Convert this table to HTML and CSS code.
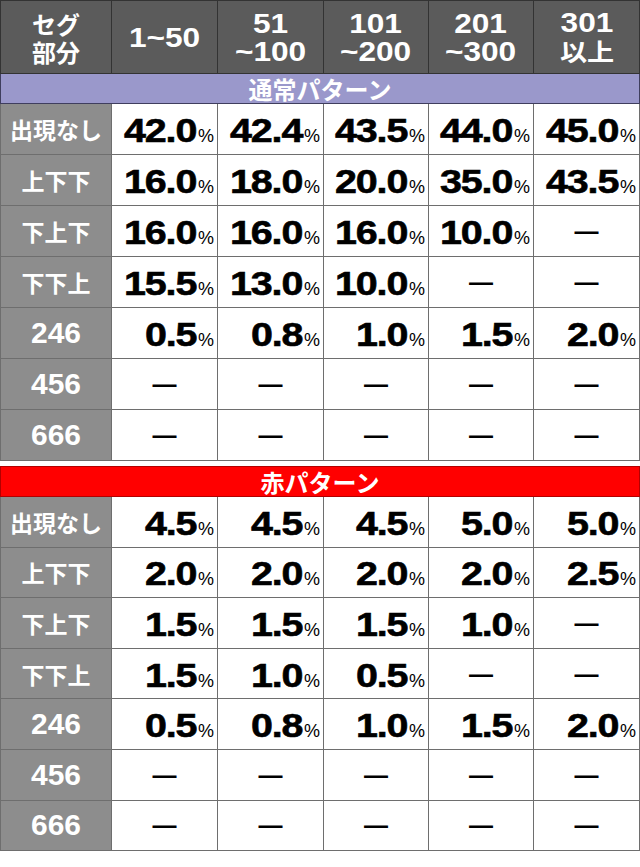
FILE: index.html
```html
<!DOCTYPE html>
<html lang="ja">
<head>
<meta charset="utf-8">
<link rel="stylesheet" href="styles.css">
</head>
<body>
<table class="grid">
  <colgroup>
    <col class="c-label"><col class="c-a"><col class="c-a"><col class="c-b"><col class="c-b"><col class="c-a">
  </colgroup>
  <tr class="head">
    <th><span class="h jp">セグ<br>部分</span></th>
    <th><span class="h">1~50</span></th>
    <th><span class="h">51<br>~100</span></th>
    <th><span class="h">101<br>~200</span></th>
    <th><span class="h">201<br>~300</span></th>
    <th><span class="h">301<br><span class="jp">以上</span></span></th>
  </tr>
  <tr class="band band-blue"><td colspan="6">通常パターン</td></tr>
  <tr><th class="lab jp">出現なし</th><td class="v"><b class="n">42.0</b><small>%</small></td><td class="v"><b class="n">42.4</b><small>%</small></td><td class="v"><b class="n">43.5</b><small>%</small></td><td class="v"><b class="n">44.0</b><small>%</small></td><td class="v"><b class="n">45.0</b><small>%</small></td></tr>
  <tr><th class="lab jp">上下下</th><td class="v"><b class="n">16.0</b><small>%</small></td><td class="v"><b class="n">18.0</b><small>%</small></td><td class="v"><b class="n">20.0</b><small>%</small></td><td class="v"><b class="n">35.0</b><small>%</small></td><td class="v"><b class="n">43.5</b><small>%</small></td></tr>
  <tr><th class="lab jp">下上下</th><td class="v"><b class="n">16.0</b><small>%</small></td><td class="v"><b class="n">16.0</b><small>%</small></td><td class="v"><b class="n">16.0</b><small>%</small></td><td class="v"><b class="n">10.0</b><small>%</small></td><td class="d">—</td></tr>
  <tr><th class="lab jp">下下上</th><td class="v"><b class="n">15.5</b><small>%</small></td><td class="v"><b class="n">13.0</b><small>%</small></td><td class="v"><b class="n">10.0</b><small>%</small></td><td class="d">—</td><td class="d">—</td></tr>
  <tr><th class="lab">246</th><td class="v"><b class="n">0.5</b><small>%</small></td><td class="v"><b class="n">0.8</b><small>%</small></td><td class="v"><b class="n">1.0</b><small>%</small></td><td class="v"><b class="n">1.5</b><small>%</small></td><td class="v"><b class="n">2.0</b><small>%</small></td></tr>
  <tr><th class="lab">456</th><td class="d">—</td><td class="d">—</td><td class="d">—</td><td class="d">—</td><td class="d">—</td></tr>
  <tr><th class="lab">666</th><td class="d">—</td><td class="d">—</td><td class="d">—</td><td class="d">—</td><td class="d">—</td></tr>
</table>

<table class="grid second">
  <colgroup>
    <col class="c-label"><col class="c-a"><col class="c-a"><col class="c-b"><col class="c-b"><col class="c-a">
  </colgroup>
  <tr class="band band-red"><td colspan="6">赤パターン</td></tr>
  <tr><th class="lab jp">出現なし</th><td class="v"><b class="n">4.5</b><small>%</small></td><td class="v"><b class="n">4.5</b><small>%</small></td><td class="v"><b class="n">4.5</b><small>%</small></td><td class="v"><b class="n">5.0</b><small>%</small></td><td class="v"><b class="n">5.0</b><small>%</small></td></tr>
  <tr><th class="lab jp">上下下</th><td class="v"><b class="n">2.0</b><small>%</small></td><td class="v"><b class="n">2.0</b><small>%</small></td><td class="v"><b class="n">2.0</b><small>%</small></td><td class="v"><b class="n">2.0</b><small>%</small></td><td class="v"><b class="n">2.5</b><small>%</small></td></tr>
  <tr><th class="lab jp">下上下</th><td class="v"><b class="n">1.5</b><small>%</small></td><td class="v"><b class="n">1.5</b><small>%</small></td><td class="v"><b class="n">1.5</b><small>%</small></td><td class="v"><b class="n">1.0</b><small>%</small></td><td class="d">—</td></tr>
  <tr><th class="lab jp">下下上</th><td class="v"><b class="n">1.5</b><small>%</small></td><td class="v"><b class="n">1.0</b><small>%</small></td><td class="v"><b class="n">0.5</b><small>%</small></td><td class="d">—</td><td class="d">—</td></tr>
  <tr><th class="lab">246</th><td class="v"><b class="n">0.5</b><small>%</small></td><td class="v"><b class="n">0.8</b><small>%</small></td><td class="v"><b class="n">1.0</b><small>%</small></td><td class="v"><b class="n">1.5</b><small>%</small></td><td class="v"><b class="n">2.0</b><small>%</small></td></tr>
  <tr><th class="lab">456</th><td class="d">—</td><td class="d">—</td><td class="d">—</td><td class="d">—</td><td class="d">—</td></tr>
  <tr><th class="lab">666</th><td class="d">—</td><td class="d">—</td><td class="d">—</td><td class="d">—</td><td class="d">—</td></tr>
</table>
</body>
</html>
```

FILE: styles.css
```css
html, body {
  margin: 0;
  padding: 0;
  background: #ffffff;
}

body {
  font-family: "Liberation Sans", Arial, "Noto Sans CJK JP", sans-serif;
  width: 640px;
}

.grid {
  border-collapse: collapse;
  table-layout: fixed;
  width: 640px;
}

.second {
  margin-top: 5px;
}

.c-label { width: 111px; }
.c-a { width: 106px; }
.c-b { width: 105px; }

.grid th,
.grid td {
  border: 1px solid #6e6e6e;
  padding: 0;
  white-space: nowrap;
}

.head th {
  height: 71px;
  background: #5b5b5b;
  border-color: #333333;
  color: #ffffff;
  text-align: center;
  vertical-align: middle;
  padding-top: 1px;
}

.h {
  display: inline-block;
  font-weight: bold;
  font-size: 28px;
  line-height: 28px;
  transform: scaleX(1.13);
  transform-origin: center;
}

.h.jp {
  transform: none;
}

.jp {
  font-family: "Noto Sans CJK JP", sans-serif;
}

.head .jp {
  font-size: 24px;
  line-height: 28px;
  font-weight: bold;
}

.band td {
  height: 29px;
  color: #ffffff;
  font-family: "Noto Sans CJK JP", sans-serif;
  font-weight: bold;
  font-size: 24px;
  line-height: 28px;
  text-align: center;
}

.band-blue td {
  background: #9a98cb;
  border-color: #3f3e5e;
}

.band-red td {
  background: #ff0000;
  border-color: #b30000;
}

.lab {
  height: 50px;
  background: #8d8d8d;
  border-color: #4a4a4a;
  color: #ffffff;
  font-weight: bold;
  font-size: 30px;
  text-align: center;
  vertical-align: middle;
}

.second .lab {
  height: 49.6px;
}

.lab.jp {
  font-size: 23px;
}

.v {
  text-align: right;
  padding-right: 3px !important;
  color: #000000;
  vertical-align: middle;
  padding-top: 3px !important;
}

.n {
  display: inline-block;
  font-weight: bold;
  font-size: 34px;
  letter-spacing: -1px;
  -webkit-text-stroke: 0.6px #000000;
  transform: scaleX(1.16);
  transform-origin: right center;
}

.v small {
  font-weight: normal;
  font-size: 18px;
  margin-left: 2px;
}

.d {
  text-align: center;
  font-weight: bold;
  font-size: 24px;
  color: #000000;
  vertical-align: middle;
}
```
